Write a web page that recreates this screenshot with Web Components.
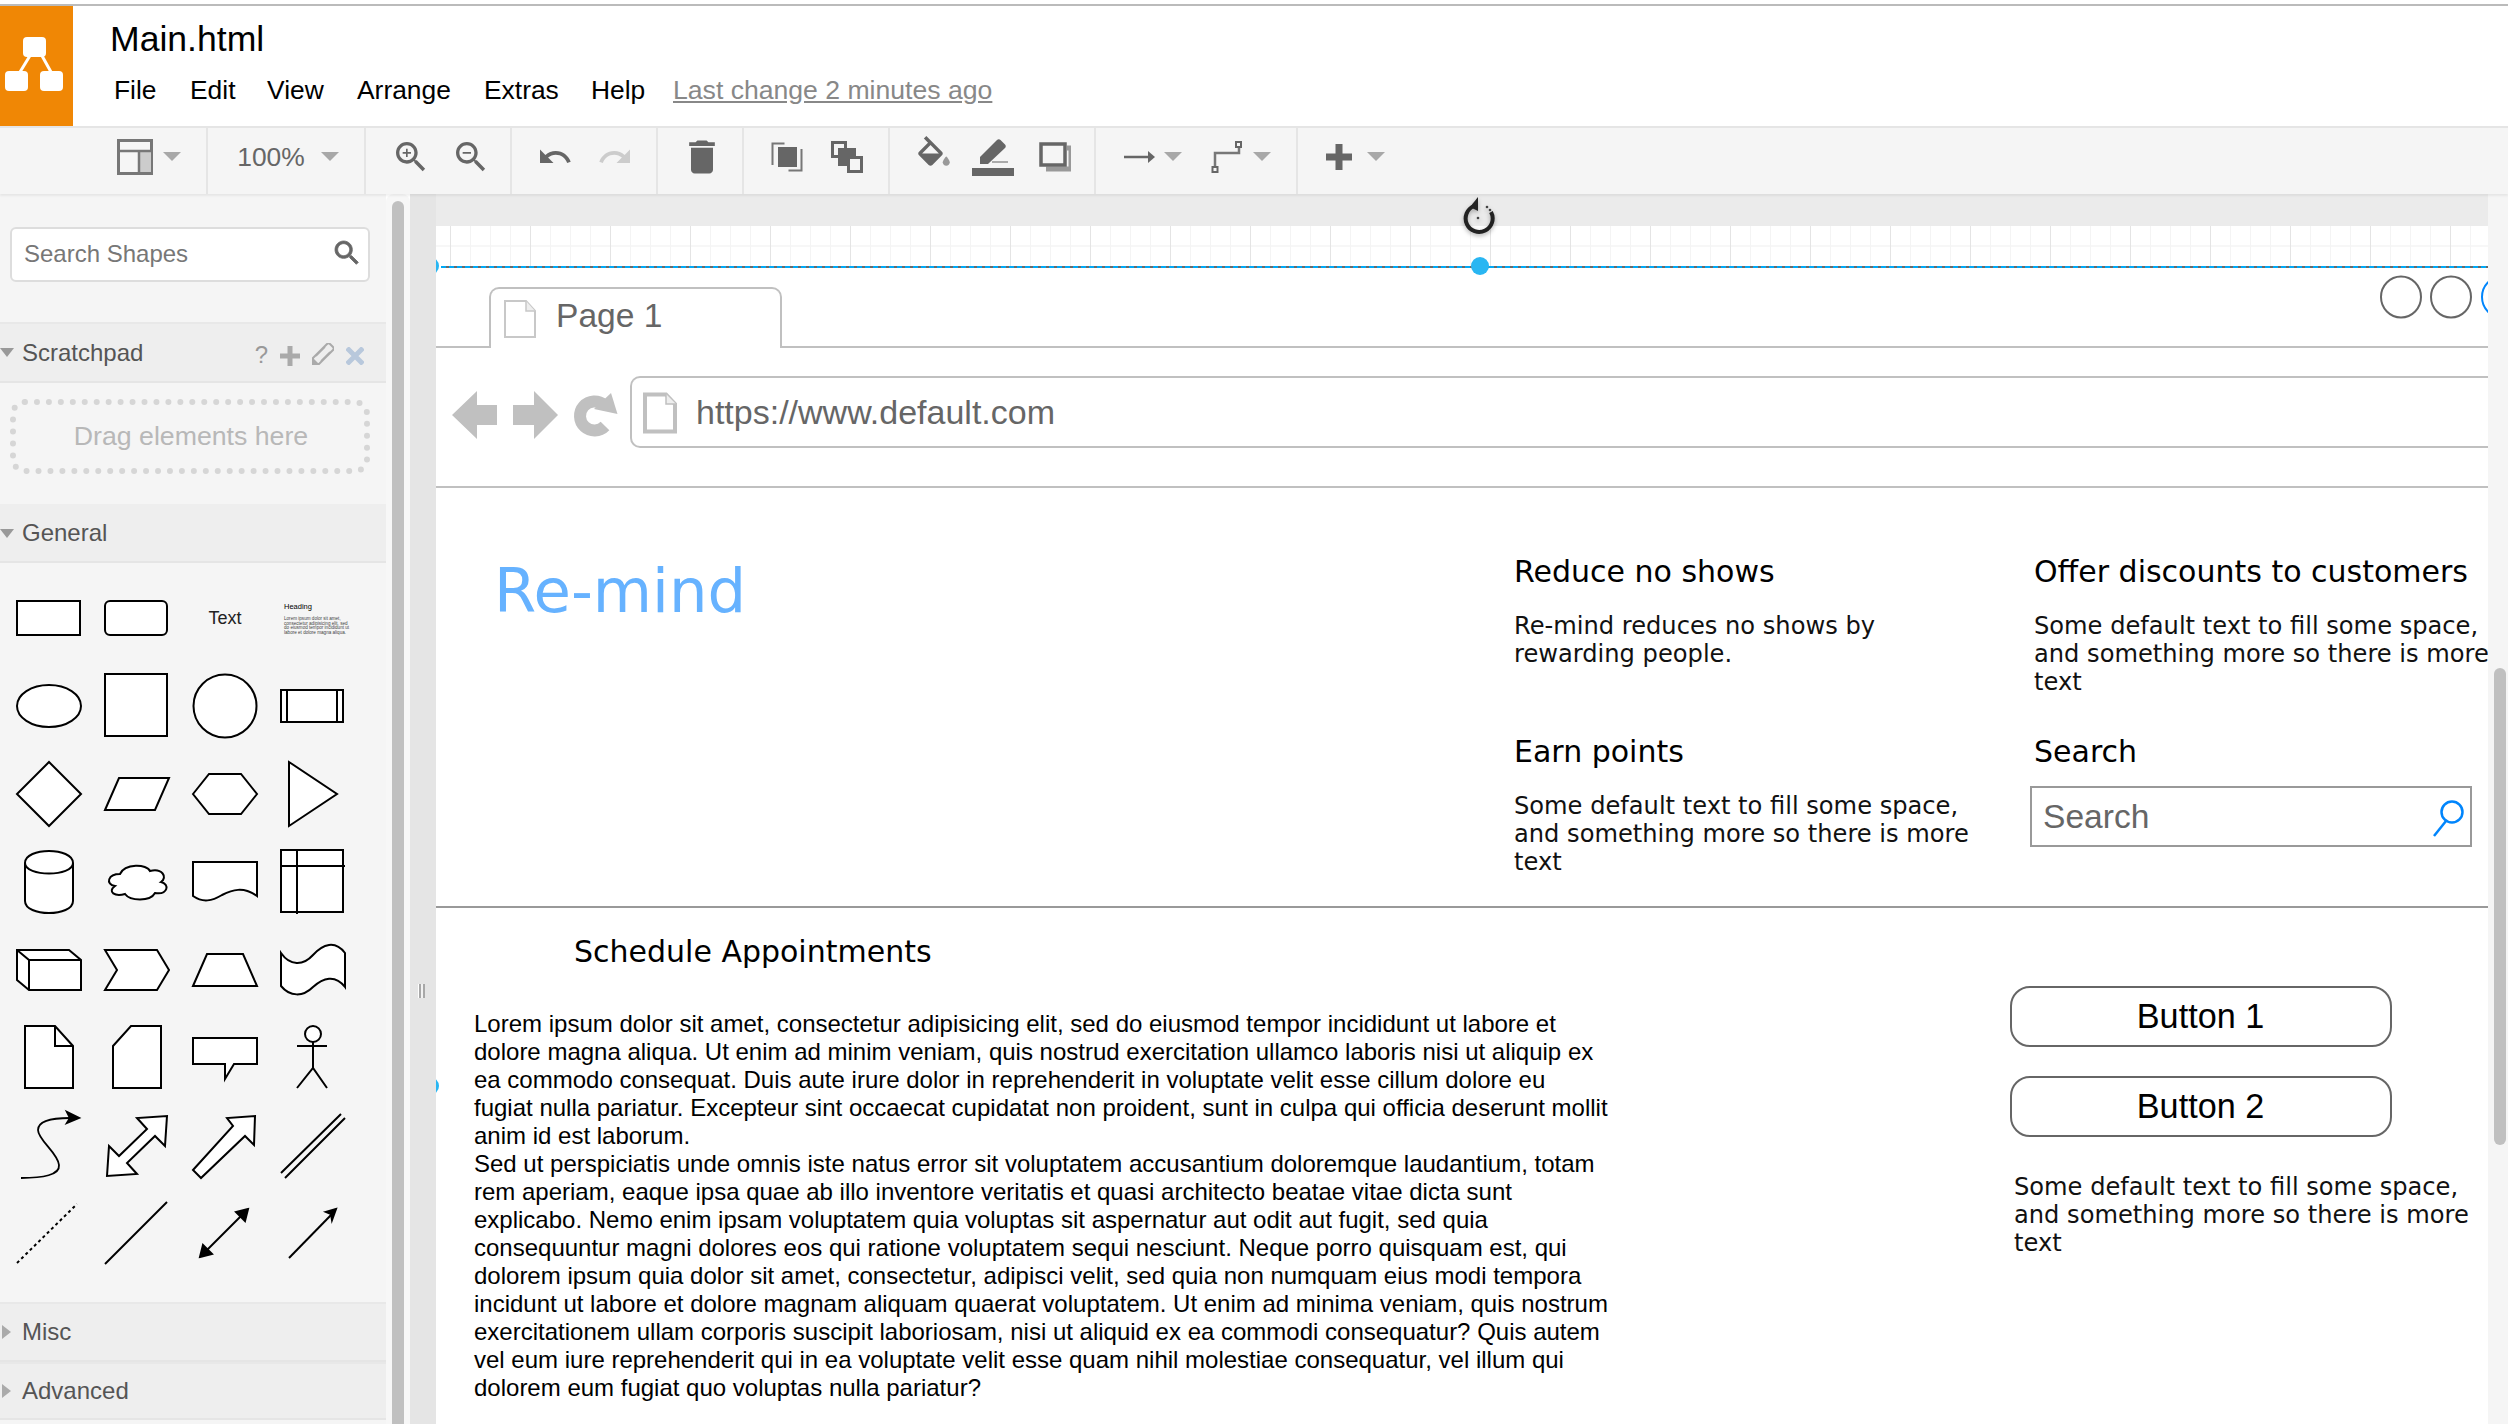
<!DOCTYPE html>
<html lang="en">
<head>
<meta charset="utf-8">
<title>Main.html</title>
<style>
html,body{margin:0;padding:0;width:2508px;height:1424px;overflow:hidden;background:#fff;font-family:"Liberation Sans",Arial,sans-serif}
</style>
</head>
<body>
<x-app></x-app>
<script>
const sans='"Liberation Sans",Arial,sans-serif';
const mat=(d,size,fill,extra='')=>`<svg width="${size}" height="${size}" viewBox="0 0 24 24" fill="${fill}" ${extra}><path d="${d}"/></svg>`;
const ZOOM='M15.5 14h-.79l-.28-.27C15.41 12.59 16 11.11 16 9.5 16 5.91 13.09 3 9.5 3S3 5.91 3 9.5 5.91 16 9.5 16c1.61 0 3.09-.59 4.23-1.57l.27.28v.79l5 4.99L20.49 19l-4.99-5zm-6 0C7.01 14 5 11.99 5 9.5S7.01 5 9.5 5 14 7.01 14 9.5 11.99 14 9.5 14z';
const ICONS={
 panel:`<svg width="36" height="36" viewBox="0 0 36 36"><rect x="1.5" y="1.5" width="33" height="33" fill="#f5f5f5" stroke="#777" stroke-width="3"/><rect x="22" y="12" width="12" height="21" fill="#ccc"/><path d="M2 12h32M22 12v21" stroke="#777" stroke-width="2.5" fill="none"/></svg>`,
 caret:`<svg width="18" height="10" viewBox="0 0 18 10"><path d="M0 1h18L9 10z" fill="#a8a8a8"/></svg>`,
 zoomin:mat(ZOOM+'M12 10h-2v2H9v-2H7V9h2V7h1v2h2z',40,'#666'),
 zoomout:mat(ZOOM+'M7 9h5v1H7z',40,'#666'),
 undo:mat('M12.5 8c-2.65 0-5.05.99-6.9 2.6L2 7v9h9l-3.62-3.62c1.39-1.16 3.16-1.88 5.12-1.88 3.54 0 6.55 2.31 7.6 5.5l2.37-.78C21.08 11.03 17.15 8 12.5 8z',36,'#666'),
 redo:mat('M18.4 10.6C16.55 8.99 14.15 8 11.5 8c-4.65 0-8.58 3.03-9.96 7.22L3.9 16c1.05-3.19 4.05-5.5 7.6-5.5 1.95 0 3.73.72 5.12 1.88L13 16h9V7l-3.6 3.6z',36,'#ccc'),
 trash:mat('M6 19c0 1.1.9 2 2 2h8c1.1 0 2-.9 2-2V7H6v12zM19 4h-3.5l-1-1h-5l-1 1H5v2h14V4z',44,'#666'),
 front:`<svg width="32" height="32" viewBox="0 0 32 32"><path d="M1.5 24V2.5h12M30.5 8v21.5h-13" fill="none" stroke="#777" stroke-width="2"/><rect x="7" y="6" width="19" height="20" fill="#666"/></svg>`,
 back:`<svg width="32" height="32" viewBox="0 0 32 32"><rect x="1.5" y="1.5" width="13" height="14" fill="#f5f5f5" stroke="#666" stroke-width="3"/><rect x="7" y="7" width="18" height="18" fill="#666"/><rect x="17.5" y="16.5" width="13" height="14" fill="#f5f5f5" stroke="#666" stroke-width="3"/></svg>`,
 fill:mat('M16.56 8.94L7.62 0 6.21 1.41l2.38 2.38-5.15 5.15c-.59.59-.59 1.54 0 2.12l5.5 5.5c.29.29.68.44 1.06.44s.77-.15 1.06-.44l5.5-5.5c.59-.58.59-1.53 0-2.12zM5.21 10L10 5.21 14.79 10H5.21z',42,'#666').replace('</svg>','<path d="M19 11.5s-2 2.17-2 3.5c0 1.1.9 2 2 2s2-.9 2-2c0-1.33-2-3.5-2-3.5z" fill="#999"/></svg>'),
 line:`<svg width="42" height="40" viewBox="0 0 42 40"><path d="M8 26v-6L25 3c1-1 2.500-1 3.500 0l4.500 4.500c1 1 1 2.500 0 3.500L16 27H8z" fill="#666"/><rect x="20" y="24" width="16" height="2" fill="#aaa"/><rect x="0" y="31" width="42" height="8" fill="#666"/></svg>`,
 shadow:`<svg width="32" height="30" viewBox="0 0 32 30"><path d="M7 27h25V6h-4" fill="none" stroke="#999" stroke-width="5"/><rect x="2" y="2" width="24" height="21" fill="#f5f5f5" stroke="#666" stroke-width="3.500"/></svg>`,
 arrow:`<svg width="34" height="14" viewBox="0 0 34 14"><path d="M1 7h26" stroke="#666" stroke-width="2.500"/><path d="M25 1l7 6-7 6z" fill="#666"/></svg>`,
 way:`<svg width="32" height="32" viewBox="0 0 32 32"><path d="M4 28V12h24V3" fill="none" stroke="#777" stroke-width="2.500"/><rect x="25" y="1" width="5" height="5" fill="#f5f5f5" stroke="#666" stroke-width="2"/><rect x="1.500" y="26" width="5" height="5" fill="#f5f5f5" stroke="#666" stroke-width="2"/></svg>`,
 plus:`<svg width="28" height="28" viewBox="0 0 28 28"><path d="M14 1v26M1 14h26" stroke="#666" stroke-width="7"/></svg>`
};

class XApp extends HTMLElement{constructor(){super();this.attachShadow({mode:'open'}).innerHTML=`
<style>:host{display:grid;width:2508px;height:1424px;grid-template-rows:128px 66px 1fr;overflow:hidden;background:#fff;font-family:${sans}}
.main{display:grid;grid-template-columns:386px 24px 26px 1fr 20px;min-height:0;padding-top:0;position:relative}
</style>
<x-menubar></x-menubar><x-toolbar></x-toolbar>
<div class="main"><x-sidebar></x-sidebar><x-scrolltrack></x-scrolltrack><x-splitter></x-splitter><x-canvas></x-canvas><x-vscroll></x-vscroll></div>`}}

class XMenubar extends HTMLElement{constructor(){super();this.attachShadow({mode:'open'}).innerHTML=`
<style>:host{display:flex;box-sizing:border-box;height:128px;padding-top:4px;background:#fff}
.wrap{flex:1;display:flex;border-top:2px solid #bbb;border-bottom:2px solid #e5e5e5;background:#fff}
.logo{width:73px;background:#f08705;flex:none;display:flex}
.r{display:flex;flex-direction:column;padding-left:37px}
.t{font-size:35.6px;line-height:40px;margin-top:13px;color:#000}
nav{display:flex;margin-top:15px;font-size:26.4px;line-height:32px;margin-left:4px}
nav span{color:#000}
nav a{color:#888;text-decoration:underline;font-size:26.6px}
</style>
<div class="wrap"><div class="logo"><svg width="73" height="120" viewBox="0 0 73 120"><path d="M31 48L20 66M41 48L51 66" stroke="#fff" stroke-width="3" fill="none"/><rect x="23" y="31" width="23" height="20" rx="4" fill="#fff"/><rect x="5" y="65" width="23" height="20" rx="4" fill="#fff"/><rect x="40" y="65" width="23" height="20" rx="4" fill="#fff"/></svg></div>
<div class="r"><div class="t">Main.html</div><nav>
<span style="width:76px">File</span><span style="width:77px">Edit</span><span style="width:90px">View</span><span style="width:127px">Arrange</span><span style="width:107px">Extras</span><span style="width:82px">Help</span><a>Last change 2 minutes ago</a></nav></div></div>`}}

class XToolbar extends HTMLElement{constructor(){super();
 const groups=[
 [208,[['panel',135,36],['caret',172,18]]],
 [366,[['100%',271,70],['caret',330,18]]],
 [512,[['zoomin',411,40],['zoomout',471,40]]],
 [658,[['undo',555,36],['redo',615,36]]],
 [744,[['trash',702,44]]],
 [890,[['front',787,32],['back',847,32]]],
 [1096,[['fill',934,42],['line',993,42],['shadow',1055,32]]],
 [1298,[['arrow',1140,34],['caret',1173,18],['way',1227,32],['caret',1262,18]]],
 [2508,[['plus',1339,28],['caret',1376,18]]]];
 let start=0,html='';
 for(const [end,items] of groups){
  let cur=start,inner='';
  for(const [n,c,w] of items){
   const ml=c-w/2-cur;cur=c+w/2;
   const content=ICONS[n]||`<span class="z">${n}</span>`;
   inner+=`<div class="it ${n==='caret'?'c':''}" style="width:${w}px;margin-left:${ml}px">${content}</div>`;
  }
  html+=`<div class="g ${end===2508?'last':''}" style="width:${end-start}px">${inner}</div>`;
  start=end;
 }
 this.attachShadow({mode:'open'}).innerHTML=`
<style>:host{display:flex;height:66px;background:#f5f5f5;box-shadow:0 2px 2px rgba(0,0,0,.06);position:relative;z-index:3}
.g{box-sizing:border-box;border-right:2px solid #e5e5e5;display:flex;align-items:flex-start;padding-top:7px;height:66px;flex:none}
.g.last{border:0}
.it{display:flex;align-items:center;justify-content:center;flex:none;height:44px}
.it svg{flex:none}
.c{margin-top:-1px}
.z{font-size:26.4px;color:#666}
</style>${html}`}}

class SbHeader extends HTMLElement{constructor(){super();
 const open=this.hasAttribute('open');
 this.attachShadow({mode:'open'}).innerHTML=`
<style>:host{display:flex;box-sizing:border-box;align-items:center;border-top:2px solid #e8e8e8;border-bottom:2px solid #e5e5e5;background:#eee;color:#555;font-size:24px;height:var(--h,60px);position:relative}
.a{width:22px;flex:none;display:flex}
.l{flex:1;line-height:28px}
</style><div class="a">${open?'<svg width="14" height="9"><path d="M0 0h14L7 9z" fill="#999"/></svg>':'<svg width="10" height="14" style="margin-left:2px"><path d="M0 0l9 7-9 7z" fill="#aaa"/></svg>'}</div><div class="l"><slot name="label"></slot></div><slot name="act"></slot>`}}

class SbSearch extends HTMLElement{constructor(){super();this.attachShadow({mode:'open'}).innerHTML=`
<style>:host{display:flex;box-sizing:border-box;align-items:center;width:360px;height:55px;margin:30px 0 0 10px;background:#fff;border:2px solid #ddd;border-radius:6px;padding:0 5px 4px 12px;color:#777;font-size:24px}
span{flex:1;padding-top:2px}svg{filter:blur(.4px)}</style><span>Search Shapes</span>
<svg width="32" height="32" viewBox="0 0 24 24" fill="#666"><path d="${ZOOM}" stroke="#666" stroke-width=".6"/></svg>`}}

class SbDrop extends HTMLElement{constructor(){super();this.attachShadow({mode:'open'}).innerHTML=`
<style>:host{display:grid;width:386px;height:77px;margin-top:15px;position:relative}
svg,div{grid-area:1/1}
div{display:flex;align-items:center;justify-content:center;font-size:26.7px;color:#b8b8b8;padding-right:4px}</style>
<svg width="386" height="77"><rect x="13" y="4" width="354" height="69" rx="12" fill="none" stroke="#d6d6d6" stroke-width="6" stroke-linecap="round" stroke-dasharray="0 11.95"/></svg><div>Drag elements here</div>`}}

class ShapePalette extends HTMLElement{constructor(){super();
 const cx=[49,137,225,313], cy=[618,706,794,882,970,1058,1146,1234];
 const S=[
 `<rect x="17" y="601" width="63" height="34"/>`,
 `<rect x="105" y="601" width="62" height="34" rx="5"/>`,
 `<text x="225" y="624" text-anchor="middle" font-size="18" fill="#222" stroke="none">Text</text>`,
 `<g stroke="none" fill="#000"><text x="284" y="609" font-size="7.5">Heading</text><g font-size="4.6" fill="#444"><text x="284" y="620">Lorem ipsum dolor sit amet,</text><text x="284" y="624.500">consectetur adipisicing elit, sed</text><text x="284" y="629">do eiusmod tempor incididunt ut</text><text x="284" y="633.500">labore et dolore magna aliqua.</text></g></g>`,
 `<ellipse cx="49" cy="706" rx="32" ry="21"/>`,
 `<rect x="105" y="674" width="62" height="62"/>`,
 `<circle cx="225" cy="706" r="31.500"/>`,
 `<rect x="281" y="690" width="62" height="32"/><path d="M287 690v32M337 690v32"/>`,
 `<path d="M49 762L81 794 49 826 17 794Z"/>`,
 `<path d="M105 810L119 778H169L155 810Z"/>`,
 `<path d="M193 794L209 774H241L257 794 241 814H209Z"/>`,
 `<path d="M289 762L337 794 289 826Z"/>`,
 `<path d="M25 863C25 847 73 847 73 863V901C73 917 25 917 25 901Z"/><path d="M25 863C25 877 73 877 73 863" fill="none"/>`,
 `<path d="M120 874C108 874 105 884 115 886 107 892 115 897 125 894 130 901 150 902 155 893 168 895 170 884 161 882 168 877 162 868 150 871 147 864 125 863 120 874Z"/>`,
 `<path d="M193 862H257V896C243 886 232 890 222 895 212 901 203 903 193 896Z"/>`,
 `<rect x="281" y="850" width="62" height="62"/><path d="M297 850v64M281 866h64"/>`,
 `<path d="M17 950H69L81 960V990H29L17 980Z"/><path d="M17 950L29 960V990M29 960H81" fill="none"/>`,
 `<path d="M105 950H157L169 970 157 990H105L117 970Z"/>`,
 `<path d="M193 986L207 954H243L257 986Z"/>`,
 `<path d="M281 953C290 966 303 966 313 955 323 944 335 940 345 953V987C335 974 323 978 313 987 303 997 290 997 281 986Z"/>`,
 `<path d="M25 1026H55L73 1046V1088H25Z"/><path d="M55 1026V1046H73" fill="none"/>`,
 `<path d="M113 1046L131 1026H161V1088H113Z"/>`,
 `<path d="M193 1038H257V1064H234L225 1079V1064H193Z"/>`,
 `<circle cx="313" cy="1034" r="8"/><path d="M297 1046H327M313 1042V1068M297 1088L313 1068 327 1088" fill="none"/>`,
 `<path d="M21 1178C43 1178 60 1175 59 1165 58 1153 38 1140 38 1130 38 1120 53 1118 70 1118" fill="none" stroke-width="1.800"/><path d="M79 1118L67 1112 70 1118 67 1123Z" fill="#000"/>`,
 `<path d="M107 1176L109 1146 119 1156 147 1129 137 1118 167 1116 165 1146 155 1136 127 1163 137 1174Z"/>`,
 `<path d="M193 1170L233 1126 227 1118 255 1116 254 1145 245 1136 201 1178Z"/>`,
 `<path d="M281 1173L341 1114M285 1178L345 1118" fill="none"/>`,
 `<path d="M17 1263L77 1204" fill="none" stroke-dasharray="3 3"/>`,
 `<path d="M105 1264L167 1202" fill="none"/>`,
 `<path d="M206 1251L243 1214" fill="none"/><path d="M248 1209L236 1212 245 1221Z M200 1257L212 1254 203 1245Z" fill="#000"/>`,
 `<path d="M289 1258L332 1214" fill="none"/><path d="M336 1209L326 1212 331 1214 332 1220Z" fill="#000"/>`
 ];
 let out='',i=0;
 for(const y of cy)for(const x of cx){out+=`<svg width="88" height="88" viewBox="${x-44} ${y-44} 88 88">${S[i++]}</svg>`}
 this.attachShadow({mode:'open'}).innerHTML=`
<style>:host{display:grid;grid-template-columns:repeat(4,88px);grid-auto-rows:88px;margin:11px 0 24px 5px;font-family:${sans}}
svg{fill:#fff;stroke:#000;stroke-width:2;overflow:visible}</style>${out}`}}

class XSidebar extends HTMLElement{constructor(){super();this.attachShadow({mode:'open'}).innerHTML=`
<style>:host{display:block;background:#f5f5f5;overflow:hidden;padding-top:3px;font-family:${sans}}
.act{display:flex;align-items:center;margin-right:22px;height:40px}
.act span{color:#999;font-size:24px;margin-right:12px;margin-top:4px}
.act svg{flex:none}
sb-header.sp{--h:61px;margin-top:40px}
sb-header.ge{--h:59px;margin-top:29px;border-top-color:#eee}
sb-header.ad{--h:58px}
</style>
<sb-search></sb-search>
<sb-header class="sp" open><span slot="label">Scratchpad</span><div class="act" slot="act"><span style="margin-left:-2px">?</span>
<svg width="20" height="20" style="margin-top:6px"><path d="M10 0v20M0 10h20" stroke="#aaa" stroke-width="5"/></svg>
<svg width="22" height="22" viewBox="0 0 22 22" style="margin:2px 12px 0"><path d="M1 21V15L15 1c1-1 2-1 3 0l3 3c1 1 1 2 0 3L7 21Z" fill="none" stroke="#aaa" stroke-width="2"/><path d="M1 21V15L7 21Z" fill="#aaa"/><path d="M4 13L13 4M9 18L18 9" stroke="#aaa" stroke-width="1.500"/></svg>
<svg width="18" height="18" style="margin-top:6px"><path d="M1 1l16 16M17 1L1 17" stroke="#b8c8dc" stroke-width="5"/></svg></div></sb-header>
<sb-drop></sb-drop>
<sb-header class="ge" open><span slot="label" style="position:relative;top:-1px">General</span></sb-header>
<shape-palette></shape-palette>
<sb-header><span slot="label">Misc</span></sb-header>
<sb-header class="ad"><span slot="label">Advanced</span></sb-header>`}}

class XScrolltrack extends HTMLElement{constructor(){super();this.attachShadow({mode:'open'}).innerHTML=`
<style>:host{display:flex;justify-content:center;background:#f7f7f7;border-radius:8px 8px 0 0;padding-top:7px}
div{width:12px;background:#c0c0c0;border-radius:6px 6px 0 0;flex:none;height:100%}</style><div></div>`}}

class XSplitter extends HTMLElement{constructor(){super();this.attachShadow({mode:'open'}).innerHTML=`
<style>:host{display:block;background:#e5e5e5;position:relative}
i{position:absolute;left:9px;top:790px;width:2px;height:14px;background:#a8a8a8;box-shadow:4px 0 0 #a8a8a8,-1px 0 0 #fff,2px 0 0 #f2f2f2}</style><i></i>`}}

class XVscroll extends HTMLElement{constructor(){super();this.attachShadow({mode:'open'}).innerHTML=`
<style>:host{display:block;background:#f5f5f5;position:relative}
i{position:absolute;left:6px;right:2px;top:474px;height:477px;background:#c0c0c0;border-radius:6px}</style><i></i>`}}

class MockNode extends HTMLElement{constructor(){super();this.attachShadow({mode:'open'}).innerHTML=`<style>:host{position:absolute;display:block;box-sizing:border-box}</style><slot></slot>`}
 connectedCallback(){const a=n=>this.getAttribute(n);
  this.style.left=(a('x')-436)+'px';this.style.top=(a('y')-194)+'px';
  if(a('w'))this.style.width=a('w')+'px';if(a('h'))this.style.height=a('h')+'px';}}

class XCanvas extends HTMLElement{constructor(){super();
 const lorem=`Lorem ipsum dolor sit amet, consectetur adipisicing elit, sed do eiusmod tempor incididunt ut labore et
dolore magna aliqua. Ut enim ad minim veniam, quis nostrud exercitation ullamco laboris nisi ut aliquip ex
ea commodo consequat. Duis aute irure dolor in reprehenderit in voluptate velit esse cillum dolore eu
fugiat nulla pariatur. Excepteur sint occaecat cupidatat non proident, sunt in culpa qui officia deserunt mollit
anim id est laborum.
Sed ut perspiciatis unde omnis iste natus error sit voluptatem accusantium doloremque laudantium, totam
rem aperiam, eaque ipsa quae ab illo inventore veritatis et quasi architecto beatae vitae dicta sunt
explicabo. Nemo enim ipsam voluptatem quia voluptas sit aspernatur aut odit aut fugit, sed quia
consequuntur magni dolores eos qui ratione voluptatem sequi nesciunt. Neque porro quisquam est, qui
dolorem ipsum quia dolor sit amet, consectetur, adipisci velit, sed quia non numquam eius modi tempora
incidunt ut labore et dolore magnam aliquam quaerat voluptatem. Ut enim ad minima veniam, quis nostrum
exercitationem ullam corporis suscipit laboriosam, nisi ut aliquid ex ea commodi consequatur? Quis autem
vel eum iure reprehenderit qui in ea voluptate velit esse quam nihil molestiae consequatur, vel illum qui
dolorem eum fugiat quo voluptas nulla pariatur?`;
 const def=`Some default text to fill some space,<br>and something more so there is more<br>text`;
 this.attachShadow({mode:'open'}).innerHTML=`
<style>:host{display:block;position:relative;overflow:hidden;background:#fff;font-family:${sans}}
.top{height:32px;background:#ebebeb}
.grid{height:40px;background-color:#fff;
 background-image:linear-gradient(90deg,#e4e4e4 1px,transparent 1px),linear-gradient(90deg,#f4f4f4 1px,transparent 1px),linear-gradient(#f7f7f7 2px,transparent 2px);
 background-size:80px 100%,20px 100%,100% 100%;background-position:14px 0,14px 0,0 19px;background-repeat:repeat-x,repeat-x,no-repeat;margin-top:0}
.sel{height:2px;background:repeating-linear-gradient(90deg,#00a8f5 0 5px,#6a6a6a 5px 8px);margin-left:5px}
.hr{background:#c0c0c0;height:2px}
.hr.d{background:#999}
mock-node.h,mock-node.b{font-family:"DejaVu Sans",Verdana,sans-serif;color:#000;white-space:nowrap}
mock-node.h{font-size:30px;line-height:36px}
mock-node.b{font-size:24.15px;line-height:28px;color:#111}
mock-node.t{font-size:33.600px;line-height:40px;color:#666;white-space:nowrap}
.btn{border:2px solid #666;border-radius:20px;display:flex;align-items:center;justify-content:center;font-size:34.2px;color:#000;background:#fff;padding-right:1px}
</style>
<div class="top"></div><div class="grid"></div><div class="sel"></div>

<mock-node x="421" y="257" w="18" h="18"><svg width="18" height="18" style="display:block"><circle cx="9" cy="9" r="9" fill="#29b6f2"/></svg></mock-node>
<mock-node x="421" y="1077" w="18" h="18"><svg width="18" height="18" style="display:block"><circle cx="9" cy="9" r="9" fill="#29b6f2"/></svg></mock-node>
<mock-node x="1471" y="257" w="18" h="18"><svg width="18" height="18" style="display:block"><circle cx="9" cy="9" r="9" fill="#29b6f2"/></svg></mock-node>
<mock-node x="1459" y="196" w="36" h="40"><svg width="36" height="40" viewBox="0 0 36 40" style="display:block;filter:drop-shadow(0 2px 2px rgba(0,0,0,.3))"><path d="M15 10A13.500 13.500 0 1 0 32 16" fill="none" stroke="#222" stroke-width="4"/><path d="M19 1l-8 10 8 4z" fill="#222"/><circle cx="19" cy="22" r="1.300" fill="#444"/><circle cx="28" cy="11" r="1.300" fill="#444"/><circle cx="31" cy="14" r="1.300" fill="#444"/></svg></mock-node>

<mock-node x="436" y="346" w="54" h="2" class="hr"></mock-node>
<mock-node x="781" y="346" w="1710" h="2" class="hr"></mock-node>
<mock-node x="489" y="287" w="293" h="61" style="border:2px solid #c0c0c0;border-bottom:0;border-radius:10px 10px 0 0;background:#fff"></mock-node>
<mock-node x="503" y="299" w="34" h="40"><svg width="34" height="40" style="display:block"><path d="M2 2H23L32 12V38H2Z" fill="#fff" stroke="#c8c8c8" stroke-width="2"/><path d="M23 2V12H32" fill="#eee" stroke="#c8c8c8" stroke-width="1.500"/></svg></mock-node>
<mock-node x="556" y="296" class="t">Page 1</mock-node>

<mock-node x="450" y="388" w="170" h="54"><svg width="170" height="54" viewBox="450 388 170 54" style="display:block"><path d="M452 415L477 391V405H497V425H477V439Z M513 405H534V391L558 415 534 439V425H513Z" fill="#c0c0c0"/><path d="M604 405A14.500 14.500 0 1 0 605 426" fill="none" stroke="#c0c0c0" stroke-width="12"/><path d="M611 393L617.500 414 594 409Z" fill="#c0c0c0"/></svg></mock-node>
<mock-node x="630" y="376" w="1860" h="72" style="border:2px solid #c0c0c0;border-right:0;border-radius:10px 0 0 10px"></mock-node>
<mock-node x="642" y="392" w="36" h="42"><svg width="36" height="42" style="display:block"><path d="M3 2.500H24L33 12V39.500H3Z" fill="#fff" stroke="#c0c0c0" stroke-width="4"/><path d="M24 2V12H34" fill="#eee" stroke="#c0c0c0" stroke-width="1.500"/></svg></mock-node>
<mock-node x="696" y="392" class="t" style="font-size:34px">https://www.default.com</mock-node>
<mock-node x="436" y="486" w="2060" h="2" class="hr"></mock-node>

<mock-node x="2380" y="275" w="110" h="44"><svg width="110" height="44" style="display:block"><ellipse cx="21" cy="22" rx="20" ry="20.500" fill="#fff" stroke="#666" stroke-width="2"/><ellipse cx="71" cy="22" rx="20" ry="20.500" fill="#fff" stroke="#666" stroke-width="2"/><ellipse cx="122" cy="22" rx="20" ry="20.500" fill="#fff" stroke="#0085fc" stroke-width="2"/></svg></mock-node>

<mock-node x="494" y="556" style="font-family:'DejaVu Sans',Verdana,sans-serif;font-size:60.8px;line-height:70px;color:#66b2ff;white-space:nowrap">Re-mind</mock-node>
<mock-node x="1514" y="554" class="h">Reduce no shows</mock-node>
<mock-node x="1514" y="612" class="b">Re-mind reduces no shows by<br>rewarding people.</mock-node>
<mock-node x="2034" y="554" class="h">Offer discounts to customers</mock-node>
<mock-node x="2034" y="612" class="b">${def}</mock-node>
<mock-node x="1514" y="734" class="h">Earn points</mock-node>
<mock-node x="1514" y="792" class="b">${def}</mock-node>
<mock-node x="2034" y="734" class="h">Search</mock-node>
<mock-node x="2030" y="786" w="442" h="61" style="border:2px solid #999;background:#fff"></mock-node>
<mock-node x="2043" y="797" class="t">Search</mock-node>
<mock-node x="2432" y="799" w="32" h="38"><svg width="32" height="38" style="display:block"><circle cx="20" cy="13" r="10.500" fill="none" stroke="#0085fc" stroke-width="2.500"/><path d="M14 22L2 37" stroke="#0085fc" stroke-width="2.500"/></svg></mock-node>
<mock-node x="436" y="906" w="2060" h="2" class="hr d"></mock-node>

<mock-node x="574" y="934" class="h">Schedule Appointments</mock-node>
<mock-node x="474" y="1010" style="font-size:24px;line-height:28px;color:#000;white-space:pre">${lorem}</mock-node>
<mock-node x="2010" y="986" w="382" h="61" class="btn">Button 1</mock-node>
<mock-node x="2010" y="1076" w="382" h="61" class="btn">Button 2</mock-node>
<mock-node x="2014" y="1173" class="b">${def}</mock-node>
`}}

for(const [n,c] of Object.entries({'x-app':XApp,'x-menubar':XMenubar,'x-toolbar':XToolbar,'sb-header':SbHeader,'sb-search':SbSearch,'sb-drop':SbDrop,'shape-palette':ShapePalette,'x-sidebar':XSidebar,'x-scrolltrack':XScrolltrack,'x-splitter':XSplitter,'x-vscroll':XVscroll,'mock-node':MockNode,'x-canvas':XCanvas}))customElements.define(n,c);
</script>
</body>
</html>
